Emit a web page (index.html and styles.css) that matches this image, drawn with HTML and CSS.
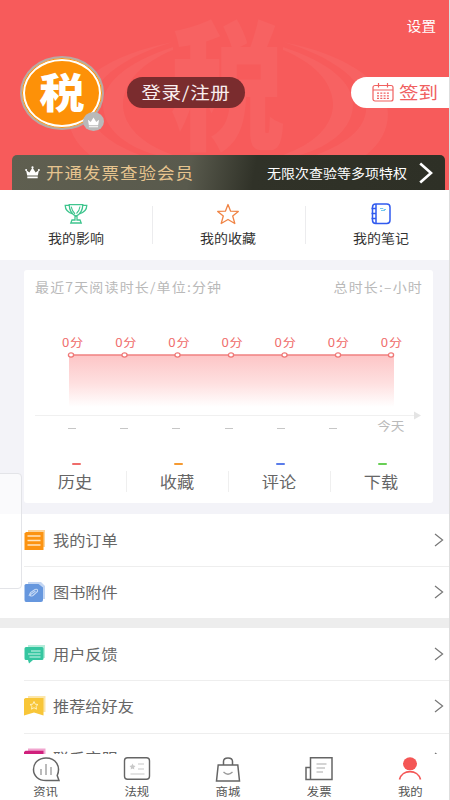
FILE: index.html
```html
<!DOCTYPE html>
<html lang="zh-CN">
<head>
<meta charset="utf-8">
<title>我的</title>
<link rel="stylesheet" href="styles.css">
</head>
<body>
<div class="app">
  <header class="hero">
    <svg class="watermark" width="450" height="190" viewBox="0 0 450 190" aria-hidden="true">
      <defs>
        <g id="rings">
          <path d="M283 42C345 54 388 82 388 114C388 130 380 144 366 155H316C350 142 368 126 366 104C362 78 330 56 283 42Z"/>
          <path d="M283 47C330 62 354 84 353 106C352 128 332 146 300 155H283C314 144 333 126 333 104C332 80 312 62 283 50Z"/>
        </g>
      </defs>
      <use href="#rings"/>
      <use href="#rings" transform="translate(456 0) scale(-1 1)"/>
      <text x="0" y="0" transform="translate(171 139) scale(.98 1.2)">税</text>
    </svg>
    <div class="topbar"><span class="t settings">设置</span></div>
    <div class="profile">
      <div class="avatar">
        <div class="avatar-face"><span>税</span></div>
        <div class="badge">
          <svg width="13" height="12" viewBox="0 0 14 13"><path d="M1 4L4 6.500L7 1.500L10 6.500L13 4L12 10H2ZM2 11h10v1.300H2Z" fill="#fff"/></svg>
        </div>
      </div>
      <div class="login"><span class="t">登录/注册</span></div>
      <div class="checkin">
        <svg width="22" height="19" viewBox="0 0 22 19" fill="none" stroke="#f0605f" stroke-width="1.2">
          <rect x="1" y="2.500" width="20" height="15.500" rx="2"/><path d="M1 7H21M6.500 0V4.500M15.500 0V4.500"/>
          <path d="M5 10.200H17M5 12.800H17M5 15.400H17" stroke-dasharray="2 1.300"/>
        </svg>
        <span class="t">签到</span>
      </div>
    </div>
    <div class="vip">
      <svg width="15" height="13" viewBox="0 0 15 13"><path d="M1 4L4.400 6.400L7.500 1.500L10.600 6.400L14 4L12.800 9.600H2.200ZM2.300 10.600h10.400v1.600H2.300Z" fill="#fff"/><circle cx="7.500" cy="1.400" r="1.100" fill="#fff"/><circle cx="1.100" cy="4" r="1" fill="#fff"/><circle cx="13.900" cy="4" r="1" fill="#fff"/></svg>
      <span class="t vip-title">开通发票查验会员</span>
      <span class="t vip-note">无限次查验等多项特权</span>
      <svg class="vip-arrow" width="14" height="22" viewBox="0 0 14 22"><path d="M1.200 1.500L12 11L1.200 20.500" fill="none" stroke="#fff" stroke-width="2.600"/></svg>
    </div>
  </header>

  <section class="shortcuts">
    <div class="shortcut">
      <svg width="24" height="22" viewBox="0 0 24 22" fill="none" stroke="#3fc58e" stroke-width="1.300">
        <path d="M5.200 1.700H18.800C18.700 7.500 16.500 11 12 13.200C7.500 11 5.300 7.500 5.200 1.700ZM5.200 2.300H1.200C1.200 6.300 3.600 9.600 9.200 11.200M18.800 2.300H22.800C22.800 6.300 20.400 9.600 14.800 11.200M11 13V17H8L6.800 20H17.200L16 17H13V13"/><path d="M16 3.500C15.500 7 14.200 9 12.500 10.500M7.200 3.700C7.800 7 8.800 9 11 11" stroke-width="1.100"/>
      </svg>
      <span class="t">我的影响</span>
    </div>
    <div class="shortcut">
      <svg width="24" height="22" viewBox="0 0 24 22" fill="none" stroke="#f08445" stroke-width="1.300" stroke-linejoin="round"><path d="M12 1.500L14.600 8.200L22.300 8.400L16.700 13L18.800 20.500L12 16.500L5.200 20.500L7.300 13L1.700 8.400L9.400 8.200Z"/></svg>
      <span class="t">我的收藏</span>
    </div>
    <div class="shortcut">
      <svg width="24" height="22" viewBox="0 0 24 22" fill="none" stroke="#315bef" stroke-width="1.500"><rect x="3.500" y="1" width="17.500" height="19.500" rx="3.200"/><path d="M7 1V20.500M2.500 5.500H7M2.500 10.500H7M2.500 15.500H7"/><path d="M11 5.500H14L15 6.500H17M12 7.500H16" stroke="#73c8ee" stroke-width="1"/></svg>
      <span class="t">我的笔记</span>
    </div>
  </section>

  <section class="reading">
    <div class="card">
      <div class="card-head"><span class="t">最近7天阅读时长/单位:分钟</span><span class="t">总时长:–小时</span></div>
      <div class="values">
        <span class="t">0分</span><span class="t">0分</span><span class="t">0分</span><span class="t">0分</span><span class="t">0分</span><span class="t">0分</span><span class="t">0分</span>
      </div>
      <svg class="chart" width="409" height="72" viewBox="0 0 409 72">
        <defs><linearGradient id="area" x1="0" y1="0" x2="0" y2="1"><stop offset="0" stop-color="#fdc5c6"/><stop offset=".55" stop-color="#fee0e0"/><stop offset="1" stop-color="#fff"/></linearGradient></defs>
        <rect x="45" y="5" width="325" height="52" fill="url(#area)"/>
        <path d="M47 5H370" stroke="#ef8180" stroke-width="1.300"/>
        <g fill="#fff" stroke="#ef7776" stroke-width="1.300"><ellipse cx="47" cy="5" rx="2.600" ry="2.100"/><ellipse cx="100.500" cy="5" rx="2.600" ry="2.100"/><ellipse cx="153.500" cy="5" rx="2.600" ry="2.100"/><ellipse cx="207" cy="5" rx="2.600" ry="2.100"/><ellipse cx="260.500" cy="5" rx="2.600" ry="2.100"/><ellipse cx="314" cy="5" rx="2.600" ry="2.100"/><ellipse cx="367" cy="5" rx="2.600" ry="2.100"/></g>
        <path d="M11 65.500H391" stroke="#f0f0f0"/><path d="M390 61.500L397 65.500L390 69.500Z" fill="#e4e4e4"/>
      </svg>
      <div class="days"><i></i><i></i><i></i><i></i><i></i><i></i><span class="t">今天</span></div>
      <div class="counts">
        <div class="count"><i class="dash red"></i><span class="t">历史</span></div>
        <div class="count"><i class="dash orange"></i><span class="t">收藏</span></div>
        <div class="count"><i class="dash blue"></i><span class="t">评论</span></div>
        <div class="count"><i class="dash green"></i><span class="t">下载</span></div>
      </div>
    </div>
  </section>

  <main class="menu">
    <div class="row">
      <svg class="icon" width="22" height="22" viewBox="0 0 22 22"><path d="M4 1H21V18H4Z" fill="#fcd49b"/><path d="M2 3H19.500V21H.5V4.500Z" fill="#fc9311"/><path d="M3.500 7H16.500M3.500 11.500H16.500M3.500 16H16.500" stroke="#ffe5c0" stroke-width="1.300"/></svg>
      <span class="t">我的订单</span><svg class="chev" width="10" height="14" viewBox="0 0 10 14"><path d="M1 1L8.600 7L1 13"/></svg>
    </div>
    <div class="row">
      <svg class="icon" width="22" height="22" viewBox="0 0 22 22"><path d="M4 1H17L21 5V18H4Z" fill="#c3d6f3"/><path d="M2 3H14.500L19 6.500V19Q19 21 17 21H2Q.5 21 .5 19V4.500Q.5 3 2 3Z" fill="#6697de"/><path d="M5 15L6.500 11.500L11 8.500Q14 7.500 13.500 10.500L9 14.500Q6 16 6.500 13.500L11.500 10" fill="none" stroke="#c5d9f5" stroke-width="1.100"/></svg>
      <span class="t">图书附件</span><svg class="chev" width="10" height="14" viewBox="0 0 10 14"><path d="M1 1L8.600 7L1 13"/></svg>
    </div>
    <div class="gap"></div>
    <div class="row">
      <svg class="icon" width="22" height="22" viewBox="0 0 22 22"><path d="M4 2H21V15H4Z" fill="#b4ecd9"/><path d="M2 4H18Q19.500 4 19.500 5.500V15.500Q19.500 17 18 17H9L5 20.500L4 17H2Q.5 17 .5 15.500V5.500Q.5 4 2 4Z" fill="#35c6a0"/><path d="M7 8H16.500M4 11H16.500M5.500 14H16.500" stroke="#d2f5ea" stroke-width="1.100"/></svg>
      <span class="t">用户反馈</span><svg class="chev" width="10" height="14" viewBox="0 0 10 14"><path d="M1 1L8.600 7L1 13"/></svg>
    </div>
    <div class="row">
      <svg class="icon" width="22" height="22" viewBox="0 0 22 22"><path d="M4 1H21.500V17H4Z" fill="#fce6aa"/><path d="M1.500 3H19.500V20.500L10 17.500L0 20.500V4Z" fill="#f8c638"/><path d="M10 6.500L11.200 9.200L14 9.500L12 11.400L12.500 14.200L10 12.700L7.500 14.200L8 11.400L6 9.500L8.800 9.200Z" fill="none" stroke="#fff0bb"/></svg>
      <span class="t">推荐给好友</span><svg class="chev" width="10" height="14" viewBox="0 0 10 14"><path d="M1 1L8.600 7L1 13"/></svg>
    </div>
    <div class="row last">
      <svg class="icon" width="22" height="22" viewBox="0 0 22 22"><path d="M4 .5H21.500V17H4Z" fill="#f1a5cf"/><path d="M1.500 2.800H19.500V20H0V4Z" fill="#d0207c"/></svg>
      <span class="t">联系客服</span><svg class="chev" width="10" height="14" viewBox="0 0 10 14"><path d="M1 1L8.600 7L1 13"/></svg>
    </div>
  </main>

  <nav class="tabs">
    <div class="tab">
      <svg width="30" height="28" viewBox="0 0 30 28" fill="none" stroke="#656565" stroke-width="1.500"><path d="M15 3C7.500 3 2.500 8 2.500 14.500S7.500 25.500 15 25.500H28L26.200 20.500C30 11.500 25 3 15 3Z"/><path d="M10 14V20M15 9V20M20 12V20" stroke="#bbb" stroke-width="2"/></svg>
      <span class="t">资讯</span>
    </div>
    <div class="tab">
      <svg width="30" height="28" viewBox="0 0 30 28" fill="none" stroke="#656565" stroke-width="1.400"><rect x="2.500" y="2.700" width="25" height="21.600" rx="3"/><path d="M16 9H22M16 14H22M8.500 19H22.500" stroke="#c8c8c8" stroke-width="1.200"/><path d="M10.500 8.500L11.500 10.500L13.500 11L12 12.500L12.300 14.500L10.500 13.500L8.700 14.500L9 12.500L7.500 11L9.500 10.500Z" fill="#c8c8c8" stroke="none"/></svg>
      <span class="t">法规</span>
    </div>
    <div class="tab">
      <svg width="30" height="28" viewBox="0 0 30 28" fill="none" stroke="#656565" stroke-width="1.500"><path d="M5.200 10H24.800L26.500 26H3.500ZM10.500 10V6.500Q10.500 3 15 3T19.500 6.500V10"/><path d="M10.500 17Q15 21.500 19.500 17" stroke="#999" stroke-width="1.300"/></svg>
      <span class="t">商城</span>
    </div>
    <div class="tab">
      <svg width="30" height="28" viewBox="0 0 30 28" fill="none" stroke="#656565" stroke-width="1.500"><path d="M6.500 2.700H28V24.500H2V12.500H6.500ZM6.500 12V24.500"/><path d="M12.500 9H22.500M12.500 13H21M12.500 17H19" stroke="#aaa" stroke-width="1.200"/></svg>
      <span class="t">发票</span>
    </div>
    <div class="tab">
      <svg width="30" height="28" viewBox="0 0 30 28"><ellipse cx="15" cy="8.800" rx="7" ry="6.500" fill="#f45655"/><path d="M4.500 24.500C7 14 23 14 25.500 24.500" fill="none" stroke="#f45655" stroke-width="1.700"/></svg>
      <span class="t">我的</span>
    </div>
  </nav>
  <div class="drawer"></div>
</div>
</body>
</html>
```
FILE: styles.css
```css
* { box-sizing: border-box; }
body {
  margin: 0;
  font-family: "Noto Sans CJK SC", sans-serif;
  background: #fff;
}
svg { display: block; flex: none; }
.app {
  position: relative;
  display: flex;
  flex-direction: column;
  width: 450px;
  height: 800px;
  overflow: hidden;
  border-right: 1px solid #dedede;
}
/* Labels are drawn slightly wider than tall. */
.t {
  display: inline-block;
  line-height: 20px;
  white-space: nowrap;
  transform: scaleY(.9);
}

.hero {
  position: relative;
  flex: none;
  height: 190px;
  background: #f75b5b;
  color: #fff;
}
.watermark { position: absolute; left: 0; top: 0; fill: #fff; fill-opacity: .045; }
.watermark text { font-size: 116px; font-weight: 900; }
.topbar {
  display: flex;
  justify-content: flex-end;
  height: 55px;
  padding: 15px 13px 0 0;
}
.settings { font-size: 14.6px; }
.profile {
  position: relative;
  display: flex;
  align-items: flex-start;
  height: 100px;
  padding-left: 20px;
}
.avatar { position: relative; width: 84px; height: 75px; margin-top: 1px; }
.avatar-face {
  display: flex;
  align-items: center;
  justify-content: center;
  width: 84px;
  height: 74px;
  padding-bottom: 5px;
  border-radius: 50%;
  background: #fd9108;
  border: 2px solid #b7aaa4;
  box-shadow: inset 0 0 0 1px #fd9108, inset 0 0 0 3px #fff;
}
.avatar-face span { font-size: 45px; font-weight: 900; line-height: 60px; transform: scaleY(.9); }
.badge {
  position: absolute;
  right: 0;
  bottom: 0;
  display: flex;
  align-items: center;
  justify-content: center;
  width: 21px;
  height: 19px;
  border-radius: 50%;
  background: #b9b9b9;
}
.login {
  display: flex;
  align-items: center;
  justify-content: center;
  width: 118px;
  height: 31px;
  margin: 22px 0 0 23px;
  padding-bottom: 1px;
  border-radius: 16px;
  background: #7a2c2e;
}
.login .t { font-size: 19.5px; letter-spacing: .7px; transform: scaleY(.86); color: #f9eeee; }
.checkin {
  display: flex;
  align-items: center;
  gap: 5px;
  width: 98px;
  height: 31px;
  margin: 22px 0 0 auto;
  padding-left: 21px;
  padding-bottom: 1px;
  border-radius: 16px 0 0 16px;
  background: #fff;
  color: #f0605f;
}
.checkin .t { font-size: 19.5px; }
.vip {
  position: relative;
  display: flex;
  align-items: center;
  height: 35px;
  margin: 0 4px 0 12px;
  padding: 0 12px 0 13px;
  border-radius: 5px 5px 0 0;
  background: linear-gradient(100deg, #5f5f50 0%, #595a4d 41%, #303228 56%, #2e3026 100%);
}
.vip-title { margin-left: 6px; font-size: 17.5px; letter-spacing: 1px; color: #e6c48f; }
.vip-note { margin-left: auto; font-size: 14px; }
.vip-arrow { margin-left: 12px; }

.shortcuts {
  display: grid;
  grid-template-columns: repeat(3, 1fr);
  flex: none;
  height: 70px;
  margin-left: -1px;
  padding-top: 13px;
}
.shortcut {
  position: relative;
  display: flex;
  flex-direction: column;
  align-items: center;
  gap: 3px;
  font-size: 14px;
  color: #333;
}
.shortcut + .shortcut::before {
  content: "";
  position: absolute;
  left: -1px;
  top: 3px;
  width: 1px;
  height: 38px;
  background: #ececee;
}
.shortcut:nth-child(1) { left: 2px; }
.shortcut:nth-child(2) { left: 4px; }
.shortcut:nth-child(3) { left: 7px; }

.reading { flex: none; height: 254px; padding: 10px 16px 0 24px; background: #f3f3f8; }
.card {
  display: flex;
  flex-direction: column;
  width: 409px;
  height: 233px;
  border-radius: 3px;
  background: #fff;
}
.card-head {
  display: flex;
  justify-content: space-between;
  height: 62px;
  padding: 5px 10px 0 11px;
  font-size: 14px;
  letter-spacing: 1.15px;
  color: #b9b9b9;
}
.values {
  display: flex;
  justify-content: space-between;
  height: 18px;
  padding: 0 30px 0 38px;
  font-size: 13.2px;
  letter-spacing: .8px;
  color: #ef6b6a;
}
.values .t { height: 20px; }
.chart { width: 409px; }
.days {
  display: flex;
  align-items: center;
  height: 16px;
  padding-left: 44px;
  margin-top: -4px;
}
.days i { width: 8px; height: 1px; margin: 4px 44.200px 0 0; background: #c6c6c6; }
.days .t { margin-left: -4px; font-size: 13.6px; color: #bababa; }
.counts { display: grid; grid-template-columns: repeat(4, 102px); margin-top: 29px; }
.count {
  position: relative;
  display: flex;
  flex-direction: column;
  align-items: center;
  gap: 7px;
  font-size: 17.2px;
  color: #666;
}
.count + .count::before {
  content: "";
  position: absolute;
  left: 0;
  top: 8px;
  width: 1px;
  height: 21px;
  background: #efefef;
}
.dash { width: 9px; height: 2px; margin-left: 3px; border-radius: 1px; }
.red { background: #ef6c6a; }
.orange { background: #f59a32; }
.blue { background: #5a7cea; }
.green { background: #68cf55; }

.menu { flex: 1; min-height: 0; overflow: hidden; background: #fff; }
.row {
  display: flex;
  align-items: center;
  height: 52px;
  padding: 0 5px 0 24px;
  font-size: 16.2px;
  color: #666;
}
.row + .row {
  height: 53px;
  margin-left: 24px;
  padding-left: 0;
  padding-bottom: 2px;
  border-top: 1px solid #eee;
}
.menu .row:nth-child(2) { height: 52px; }
.row.last .t { margin-top: -3px; }
.icon { margin-right: 7px; }
.chev { margin-left: auto; fill: none; stroke: #777; stroke-width: 1.2; }
.gap { height: 10px; background: #ededed; }

.tabs {
  display: grid;
  grid-template-columns: repeat(5, 91.200px);
  flex: none;
  height: 46px;
  background: #fff;
}
.tab {
  display: flex;
  flex-direction: column;
  align-items: center;
  padding-top: 1px;
  font-size: 12.4px;
  color: #555;
}
.tab .t { margin-top: -2px; }
.drawer {
  position: absolute;
  left: -4px;
  top: 473px;
  width: 26px;
  height: 116px;
  border: 1px solid #e3e4e8;
  border-radius: 4px;
  background: rgba(255, 255, 255, .55);
}
```
